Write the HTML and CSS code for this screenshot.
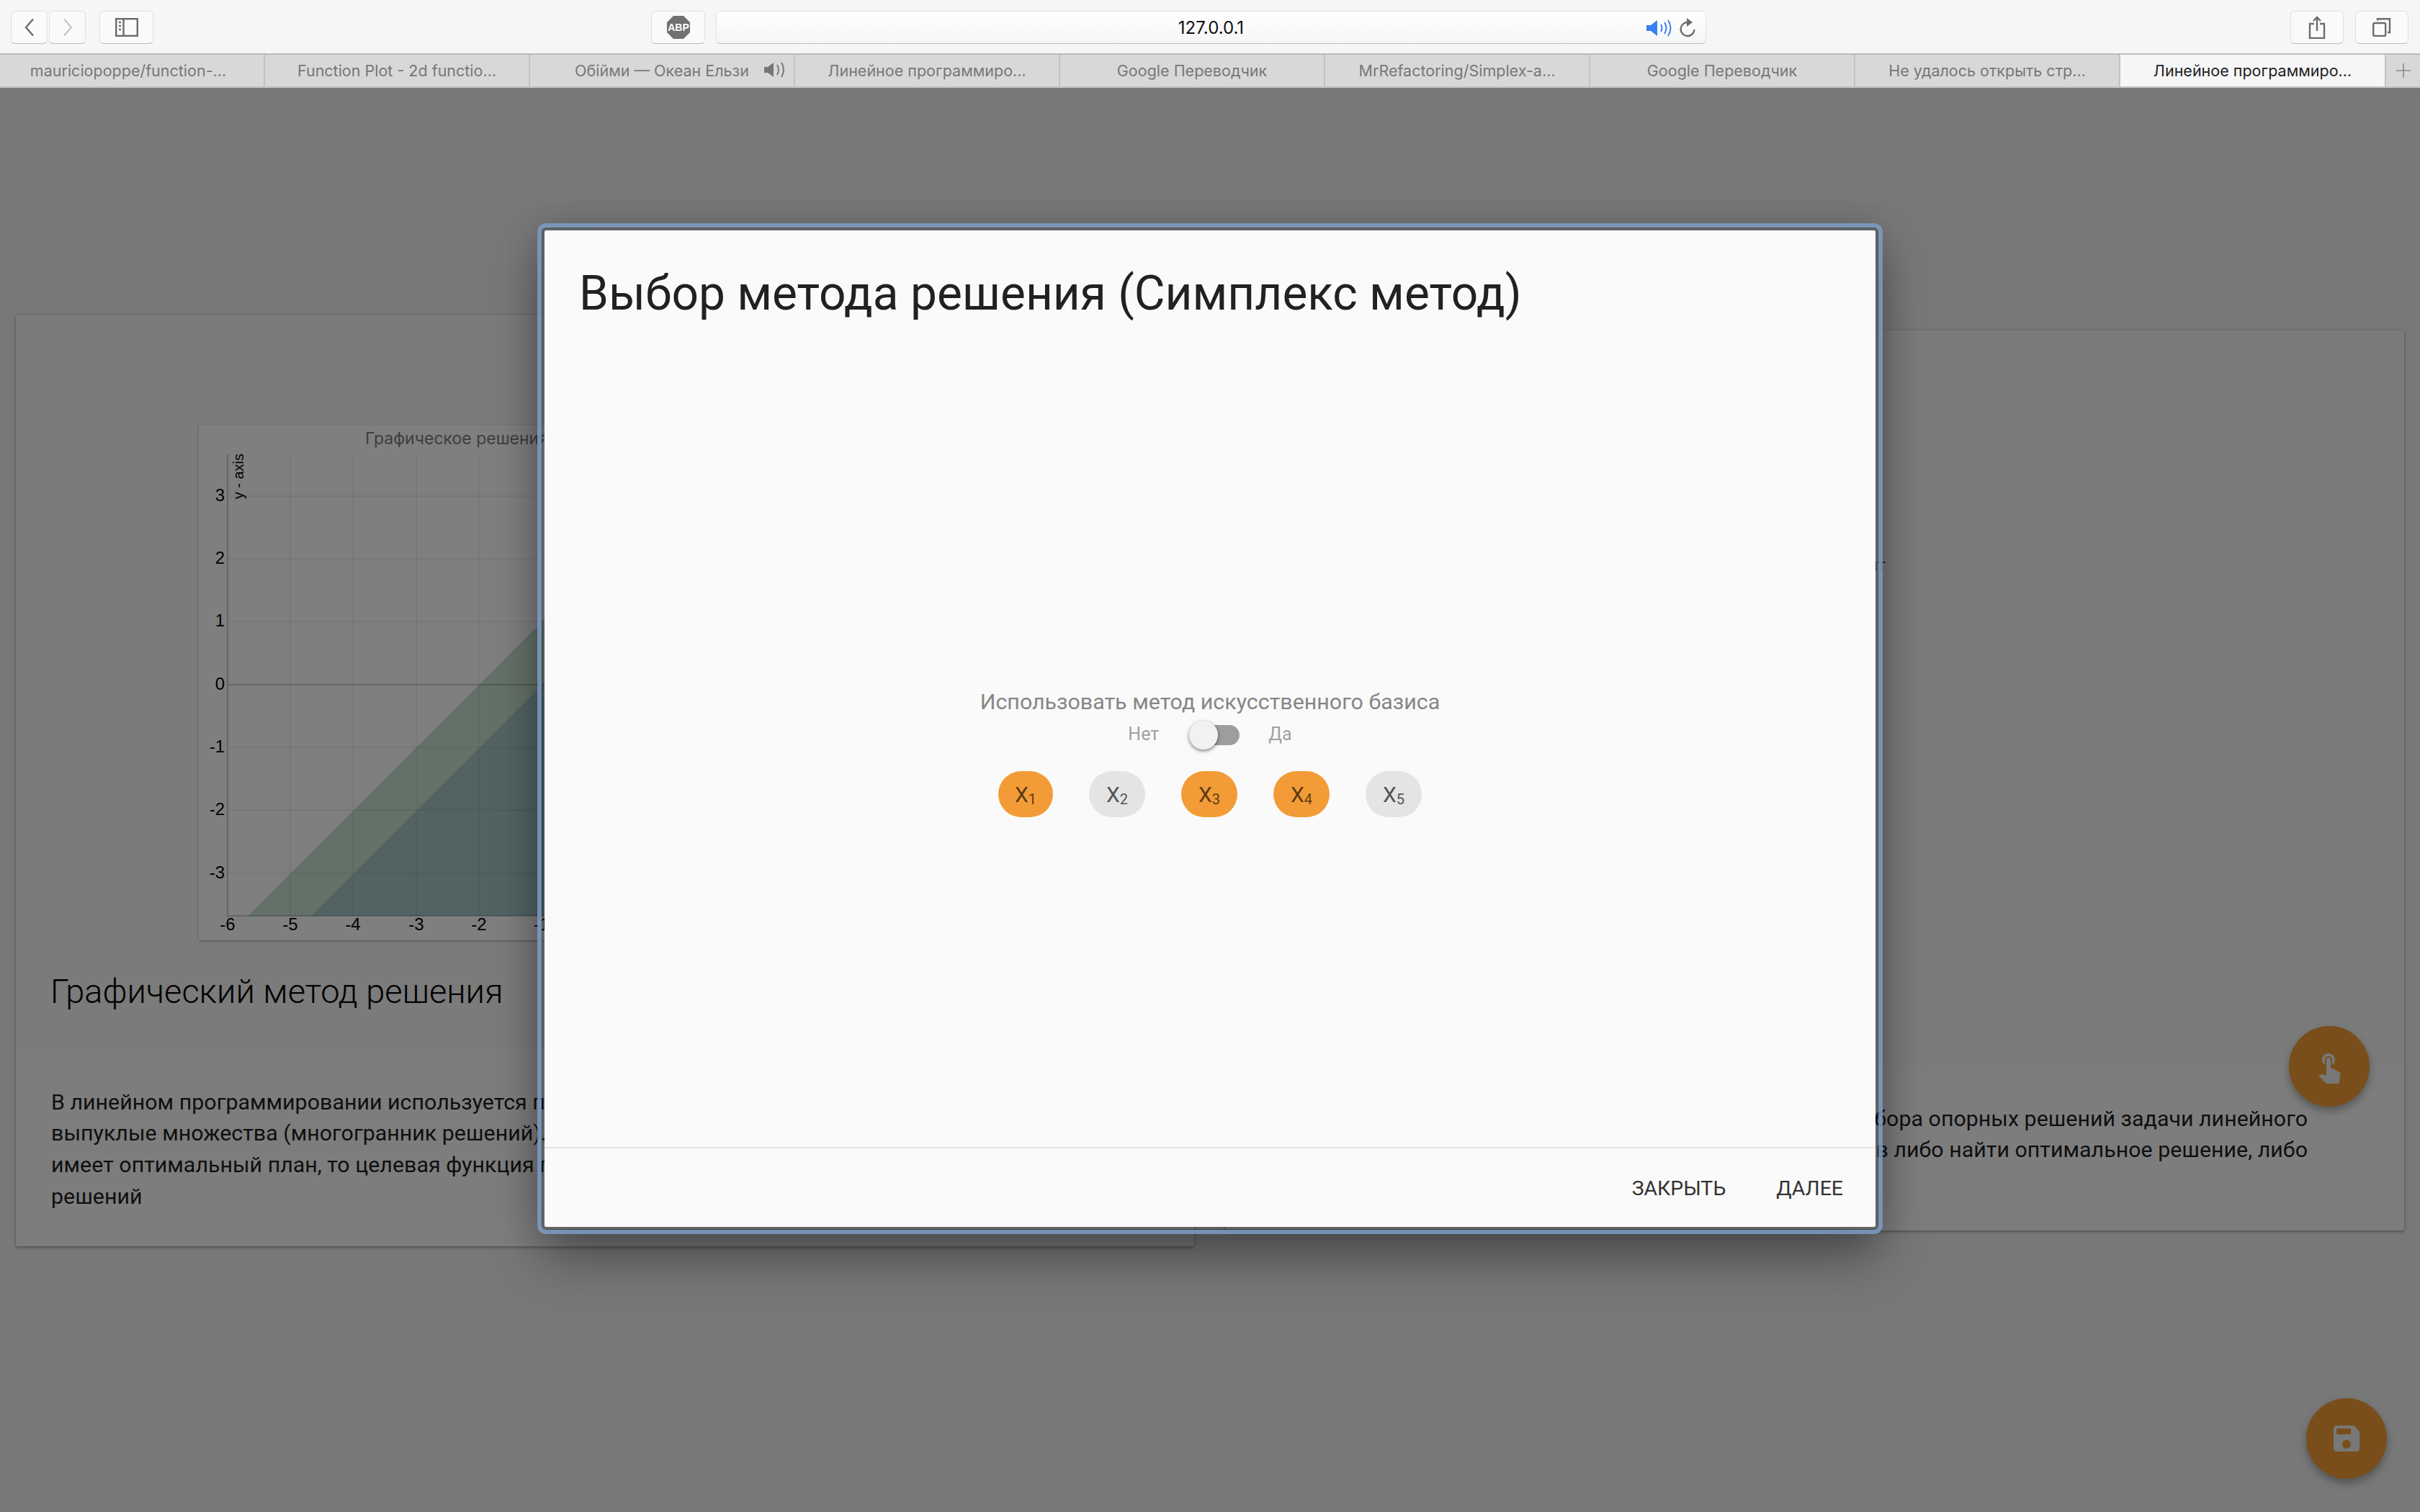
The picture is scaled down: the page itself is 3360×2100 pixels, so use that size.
FILE: index.html
```html
<!DOCTYPE html>
<html lang="ru">
<head>
    <meta charset="UTF-8">
    <meta name="viewport" content="width=device-width, initial-scale=1.0">
    <title>Линейное программирование</title>
    <link rel="stylesheet" href="styles.css">
</head>
<body>

    <!-- Панель браузера -->
    <header class="toolbar">
        <button class="tool-btn nav-btn">
            <svg width="16" height="26" viewBox="0 0 16 26"><path d="M13 1.5 3 13l10 11.5" class="ico-line"/></svg>
        </button>
        <button class="tool-btn nav-btn nav-next">
            <svg width="16" height="26" viewBox="0 0 16 26"><path d="M3 1.5 13 13 3 24.5" class="ico-line ico-off"/></svg>
        </button>
        <button class="tool-btn side-btn">
            <svg width="32" height="26" viewBox="0 0 32 26">
                <rect x="1.2" y="1.2" width="29.6" height="23.6" class="ico-line"/>
                <path d="M11.5 1v24" class="ico-line"/>
                <path d="M5 6h3M5 11h3M5 16h3" class="ico-line"/>
            </svg>
        </button>
        <button class="tool-btn abp-btn">
            <svg width="34" height="34" viewBox="0 0 34 34">
                <path d="M10 1h14l9 9v14l-9 9H10l-9-9V10z" fill="#707070"/>
                <text x="17" y="22" class="abp-text">ABP</text>
            </svg>
        </button>
        <div class="url-box">
            <span class="url-text">127.0.0.1</span>
            <svg class="url-sound" width="38" height="24" viewBox="0 0 38 24">
                <path d="M1 8h6l9-7v22l-9-7H1z" fill="#3a80f2"/>
                <path d="M21 7q3 5 0 10M26 4q5 8 0 16M31 1q7 11 0 22" class="ico-blue"/>
            </svg>
            <svg class="url-reload" width="24" height="28" viewBox="0 0 24 28">
                <path d="M12 7a9.5 9.5 0 1 0 9.5 10" class="ico-line"/>
                <path d="M11 1l8 6-8 6z" fill="#6b6b6b"/>
            </svg>
        </div>
        <button class="tool-btn right-btn share-btn">
            <svg width="24" height="32" viewBox="0 0 24 32">
                <path d="M8 11H2v20h20V11h-6M12 21V2M7 7l5-5 5 5" class="ico-line"/>
            </svg>
        </button>
        <button class="tool-btn right-btn">
            <svg width="26" height="26" viewBox="0 0 26 26">
                <rect x="1.2" y="7" width="17" height="18" rx="2" class="ico-line"/>
                <path d="M7 3.5V1.2h17V20h-3" class="ico-line"/>
            </svg>
        </button>
    </header>

    <!-- Вкладки -->
    <nav class="tabs">
        <div class="tab tab-first">mauriciopoppe/function-…</div>
        <div class="tab">Function Plot - 2d functio…</div>
        <div class="tab">
            Обійми — Океан Ельзи
            <svg class="tab-sound" width="32" height="22" viewBox="0 0 32 22">
                <path d="M1 7h5l8-6v20l-8-6H1z" fill="#777"/>
                <path d="M19 4q4 7 0 14M25 1q6 10 0 20" class="ico-grey"/>
            </svg>
        </div>
        <div class="tab">Линейное программиро…</div>
        <div class="tab">Google Переводчик</div>
        <div class="tab">MrRefactoring/Simplex-a…</div>
        <div class="tab">Google Переводчик</div>
        <div class="tab">Не удалось открыть стр…</div>
        <div class="tab tab-active">Линейное программиро…</div>
        <div class="tab-add">
            <svg width="22" height="22" viewBox="0 0 22 22"><path d="M11 1v20M1 11h20" class="ico-plus"/></svg>
        </div>
    </nav>

    <main class="page">
        <section class="card card-left">
            <div class="card-media">
                <div class="plot">
                    <svg width="1128" height="715" viewBox="0 0 1128 715">
                        <path d="M68 681 L1128 -379 V681 Z" fill="#c8e2d2"/>
                        <path d="M156 681 L1128 -291 V681 Z" fill="#a6c6c8"/>
                        <path d="M127 39v642M214 39v642M302 39v642M389 39v642M476 39v642M563 39v642" class="grid"/>
                        <path d="M40 98h1088M40 185h1088M40 272h1088M40 447h1088M40 534h1088M40 622h1088" class="grid"/>
                        <path d="M40 360h1088" class="axis"/>
                        <path d="M40 39v642h1088" class="axis"/>
                        <text x="40" y="701" class="tick">-6</text>
                        <text x="127" y="701" class="tick">-5</text>
                        <text x="214" y="701" class="tick">-4</text>
                        <text x="302" y="701" class="tick">-3</text>
                        <text x="389" y="701" class="tick">-2</text>
                        <text x="476" y="701" class="tick">-1</text>
                        <text x="36" y="105" class="tick tick-y">3</text>
                        <text x="36" y="192" class="tick tick-y">2</text>
                        <text x="36" y="279" class="tick tick-y">1</text>
                        <text x="36" y="367" class="tick tick-y">0</text>
                        <text x="36" y="454" class="tick tick-y">-1</text>
                        <text x="36" y="541" class="tick tick-y">-2</text>
                        <text x="36" y="629" class="tick tick-y">-3</text>
                        <text transform="translate(62 39) rotate(-90)" class="axis-name">y - axis</text>
                        <text x="231" y="26" class="plot-title">Графическое решения задачи</text>
                    </svg>
                </div>
                <h2 class="card-title">Графический метод решения</h2>
            </div>
            <div class="card-body">
                <p class="card-text">В линейном программировании используется понятие<br>выпуклые множества (многогранник решений). Если задача<br>имеет оптимальный план, то целевая функция принимает максимум<br>решений</p>
            </div>
        </section>

        <section class="card card-right">
            <div class="card-media card-media-right">
                <p class="media-note">Базисный элемент</p>
            </div>
            <div class="card-body card-body-right">
                <p class="card-text">Метод последовательного перебора опорных решений задачи линейного<br>программирования позволяет за конечное число шагов либо найти оптимальное решение, либо</p>
            </div>
        </section>

        <button class="fab fab-touch">
            <svg width="48" height="48" viewBox="0 0 24 24"><path d="M9 11.24V7.5C9 6.12 10.12 5 11.5 5S14 6.12 14 7.5v3.74c1.21-.81 2-2.18 2-3.74C16 5.01 13.99 3 11.5 3S7 5.01 7 7.5c0 1.56.79 2.93 2 3.74zm9.84 4.63l-4.54-2.26c-.17-.07-.35-.11-.54-.11H13v-6c0-.83-.67-1.5-1.5-1.5S10 6.67 10 7.5v10.74l-3.43-.72c-.08-.01-.15-.03-.24-.03-.31 0-.59.13-.79.33l-.79.8 4.94 4.94c.27.27.65.44 1.06.44h6.79c.75 0 1.33-.55 1.44-1.28l.75-5.27c.01-.07.02-.14.02-.2 0-.62-.38-1.16-.91-1.38z" fill="#f0f0f0"/></svg>
        </button>
        <button class="fab fab-save">
            <svg width="48" height="48" viewBox="0 0 24 24"><path d="M17 3H5c-1.11 0-2 .9-2 2v14c0 1.1.89 2 2 2h14c1.1 0 2-.9 2-2V7l-4-4zm-5 16c-1.66 0-3-1.34-3-3s1.34-3 3-3 3 1.34 3 3-1.34 3-3 3zm3-10H5V5h10v4z" fill="#f0f0f0"/></svg>
        </button>

        <!-- Диалог выбора метода -->
        <div class="overlay">
            <div class="modal">
                <h1 class="modal-title">Выбор метода решения (Симплекс метод)</h1>
                <div class="modal-body">
                    <p class="basis-label">Использовать метод искусственного базиса</p>
                    <div class="switch-row">
                        <span class="switch-text">Нет</span>
                        <span class="switch"><span class="switch-thumb"></span></span>
                        <span class="switch-text">Да</span>
                    </div>
                    <div class="chips">
                        <span class="chip chip-on chip-first">X<sub>1</sub></span>
                        <span class="chip">X<sub>2</sub></span>
                        <span class="chip chip-on">X<sub>3</sub></span>
                        <span class="chip chip-on">X<sub>4</sub></span>
                        <span class="chip">X<sub>5</sub></span>
                    </div>
                </div>
                <div class="modal-footer">
                    <button class="text-btn">ЗАКРЫТЬ</button>
                    <button class="text-btn">ДАЛЕЕ</button>
                </div>
            </div>
        </div>
    </main>

</body>
</html>
```

FILE: styles.css
```css
body {
    font-family: Roboto, sans-serif;
    display: flex;
    flex-direction: column;
    width: 3360px;
    height: 2100px;
    margin: 0;
    overflow: hidden;
    background: #f0f0f0;
}
button {
    font-family: inherit;
    cursor: pointer;
}

/* toolbar */
.toolbar {
    display: flex;
    align-items: flex-start;
    box-sizing: border-box;
    height: 76px;
    padding: 15px 16px 0 15px;
    background: #f6f6f6;
    border-bottom: 2px solid #bdbdbd;
}
.tool-btn {
    display: flex;
    justify-content: center;
    align-items: center;
    box-sizing: border-box;
    height: 46px;
    padding: 0;
    background: #fafafa;
    border: 1px solid #e0e0e0;
    border-bottom-color: #bcbcbc;
    border-radius: 6px;
}
.nav-btn {
    width: 51px;
}
.nav-next {
    margin-left: 2px;
}
.side-btn {
    width: 75px;
    margin-left: 19px;
}
.abp-btn {
    width: 75px;
    margin-left: 691px;
}
.right-btn {
    width: 74px;
    margin-left: 16px;
}
.share-btn {
    margin-left: auto;
}
.ico-line {
    fill: none;
    stroke: #6b6b6b;
    stroke-width: 2.4;
}
.ico-off {
    stroke: #c6c6c6;
}
.ico-blue {
    fill: none;
    stroke: #3a80f2;
    stroke-width: 2;
}
.ico-grey {
    fill: none;
    stroke: #777;
    stroke-width: 2;
}
.ico-plus {
    fill: none;
    stroke: #8a8a8a;
    stroke-width: 1.6;
}
.abp-text {
    font-family: "Liberation Sans", sans-serif;
    font-size: 14px;
    font-weight: 700;
    fill: #fff;
    text-anchor: middle;
}
.url-box {
    position: relative;
    display: flex;
    justify-content: center;
    align-items: center;
    box-sizing: border-box;
    width: 1375px;
    height: 46px;
    margin-left: 15px;
    background: linear-gradient(#fff, #f6f6f6);
    border: 1px solid #e2e2e2;
    border-bottom-color: #bcbcbc;
    border-radius: 6px;
}
.url-text {
    font-family: Inter, sans-serif;
    font-size: 24px;
    color: #111;
}
.url-sound {
    position: absolute;
    right: 45px;
    top: 11px;
}
.url-reload {
    position: absolute;
    right: 13px;
    top: 8px;
}

/* tabs */
.tabs {
    display: flex;
    height: 46px;
    background: #d8d8d8;
    border-bottom: 2px solid #c4c4c4;
    box-sizing: border-box;
    font-family: Inter, sans-serif;
    font-size: 21.5px;
    color: #777;
}
.tab {
    position: relative;
    display: flex;
    justify-content: center;
    align-items: center;
    box-sizing: border-box;
    flex: 0 0 368px;
    border-right: 2px solid #c2c2c2;
    white-space: nowrap;
}
.tab-first {
    padding-right: 10px;
}
.tab-active {
    background: #f6f6f6;
    color: #222;
    flex-basis: 369px;
}
.tab-add {
    display: flex;
    justify-content: center;
    align-items: center;
    flex: 1;
}
.tab-sound {
    position: absolute;
    right: 10px;
    top: 10px;
}

/* page */
.page {
    position: relative;
    display: flex;
    flex: 1;
    align-items: center;
    gap: 44px;
    padding: 0 22px 55px;
    box-sizing: border-box;
}
.card {
    flex: 1;
    background: #f6f6f6;
    border-radius: 4px;
    box-shadow: 0 2px 4px rgba(0, 0, 0, 0.3), 0 0 3px rgba(0, 0, 0, 0.12);
}
.card-media {
    display: flex;
    flex-direction: column;
    align-items: center;
    box-sizing: border-box;
    height: 1021px;
    padding-top: 154px;
}
.card-media-right {
    height: 1022px;
    padding-top: 312px;
}
.media-note {
    margin: 0 18px 0 0;
    font-size: 24px;
    color: #555;
}
.plot {
    width: 1128px;
    height: 715px;
    background: #fff;
    box-shadow: 0 1px 3px rgba(0, 0, 0, 0.35);
}
.plot svg {
    display: block;
}
.grid {
    fill: none;
    stroke: rgba(0, 0, 0, 0.08);
    stroke-width: 1.5;
}
.axis {
    fill: none;
    stroke: rgba(0, 0, 0, 0.2);
    stroke-width: 2;
}
.tick {
    font-family: "Liberation Sans", sans-serif;
    font-size: 24px;
    fill: #000;
    text-anchor: middle;
}
.tick-y {
    text-anchor: end;
}
.axis-name {
    font-family: "Liberation Sans", sans-serif;
    font-size: 20px;
    fill: #000;
    text-anchor: end;
}
.plot-title {
    font-family: Inter, sans-serif;
    font-size: 23px;
    fill: #7c7c7c;
}
.card-title {
    align-self: flex-start;
    margin: 41px 0 0 48px;
    font-size: 47px;
    font-weight: 300;
    line-height: 60px;
    color: #000;
}
.card-body {
    box-sizing: border-box;
    height: 273px;
    padding: 51px 49px 0;
    background: #fafafa;
    border-radius: 0 0 4px 4px;
}
.card-body-right {
    height: 228px;
    padding: 51px 134px 0 0;
    text-align: right;
}
.card-text {
    margin: 0;
    font-size: 30.4px;
    line-height: 43.7px;
    color: rgba(0, 0, 0, 0.9);
    white-space: nowrap;
}

/* floating buttons */
.fab {
    position: absolute;
    display: flex;
    justify-content: center;
    align-items: center;
    width: 112px;
    height: 112px;
    padding: 0;
    background: #f39c37;
    border: none;
    border-radius: 50%;
    box-shadow: 0 6px 12px rgba(0, 0, 0, 0.3);
}
.fab-touch {
    top: 1303px;
    left: 3178px;
}
.fab-save {
    top: 1820px;
    left: 3202px;
}

/* modal */
.overlay {
    position: absolute;
    top: 0;
    right: 0;
    bottom: 0;
    left: 0;
    display: flex;
    justify-content: center;
    align-items: flex-start;
    background: rgba(0, 0, 0, 0.5);
}
.modal {
    display: flex;
    flex-direction: column;
    box-sizing: border-box;
    width: 1856px;
    height: 1392px;
    margin-top: 194px;
    background: #fafafa;
    background-clip: padding-box;
    border: 4px solid rgba(0, 0, 0, 0.18);
    border-radius: 6px;
    outline: 6px solid rgba(123, 156, 198, 0.85);
    box-shadow: 0 40px 70px rgba(0, 0, 0, 0.35), 0 0 50px rgba(0, 0, 0, 0.2);
}
.modal-title {
    box-sizing: border-box;
    height: 180px;
    margin: 0;
    padding: 48px 48px 0;
    font-family: Roboto, sans-serif;
    font-size: 65.8px;
    font-weight: 400;
    line-height: 80px;
    color: #212121;
    white-space: nowrap;
}
.modal-body {
    display: flex;
    flex: 1;
    flex-direction: column;
    justify-content: center;
    align-items: center;
}
.basis-label {
    margin: -2px 0 0;
    font-size: 30.4px;
    line-height: 38px;
    color: #868686;
}
.switch-row {
    display: flex;
    align-items: center;
    gap: 40px;
    margin-top: 7px;
}
.switch-text {
    position: relative;
    top: -2px;
    font-size: 25px;
    color: #a0a0a0;
}
.switch {
    position: relative;
    display: block;
    width: 72px;
    height: 40px;
}
.switch::before {
    content: "";
    position: absolute;
    top: 6px;
    left: 8px;
    right: 0;
    height: 28px;
    background: #9e9e9e;
    border-radius: 14px;
}
.switch-thumb {
    position: absolute;
    top: 0;
    left: 2px;
    width: 40px;
    height: 40px;
    background: #f1f1f1;
    border-radius: 50%;
    box-shadow: 0 2px 5px rgba(0, 0, 0, 0.5);
}
.chips {
    display: flex;
    gap: 50px;
    margin-top: 30px;
}
.chip {
    display: flex;
    justify-content: center;
    align-items: center;
    width: 78px;
    height: 64px;
    background: #e4e4e4;
    border-radius: 32px;
    font-size: 30px;
    color: #555;
}
.chip-first {
    width: 76px;
}
.chip sub {
    font-size: 20px;
    line-height: 1;
    margin-top: 14px;
}
.chip-on {
    background: #f39c37;
    color: #5c3b12;
}
.modal-footer {
    display: flex;
    justify-content: flex-end;
    align-items: center;
    gap: 70px;
    box-sizing: border-box;
    height: 111px;
    padding: 2px 45px 0 0;
    border-top: 2px solid #e4e4e4;
}
.text-btn {
    padding: 0;
    background: none;
    border: none;
    font-size: 28.4px;
    color: #333;
}
```
